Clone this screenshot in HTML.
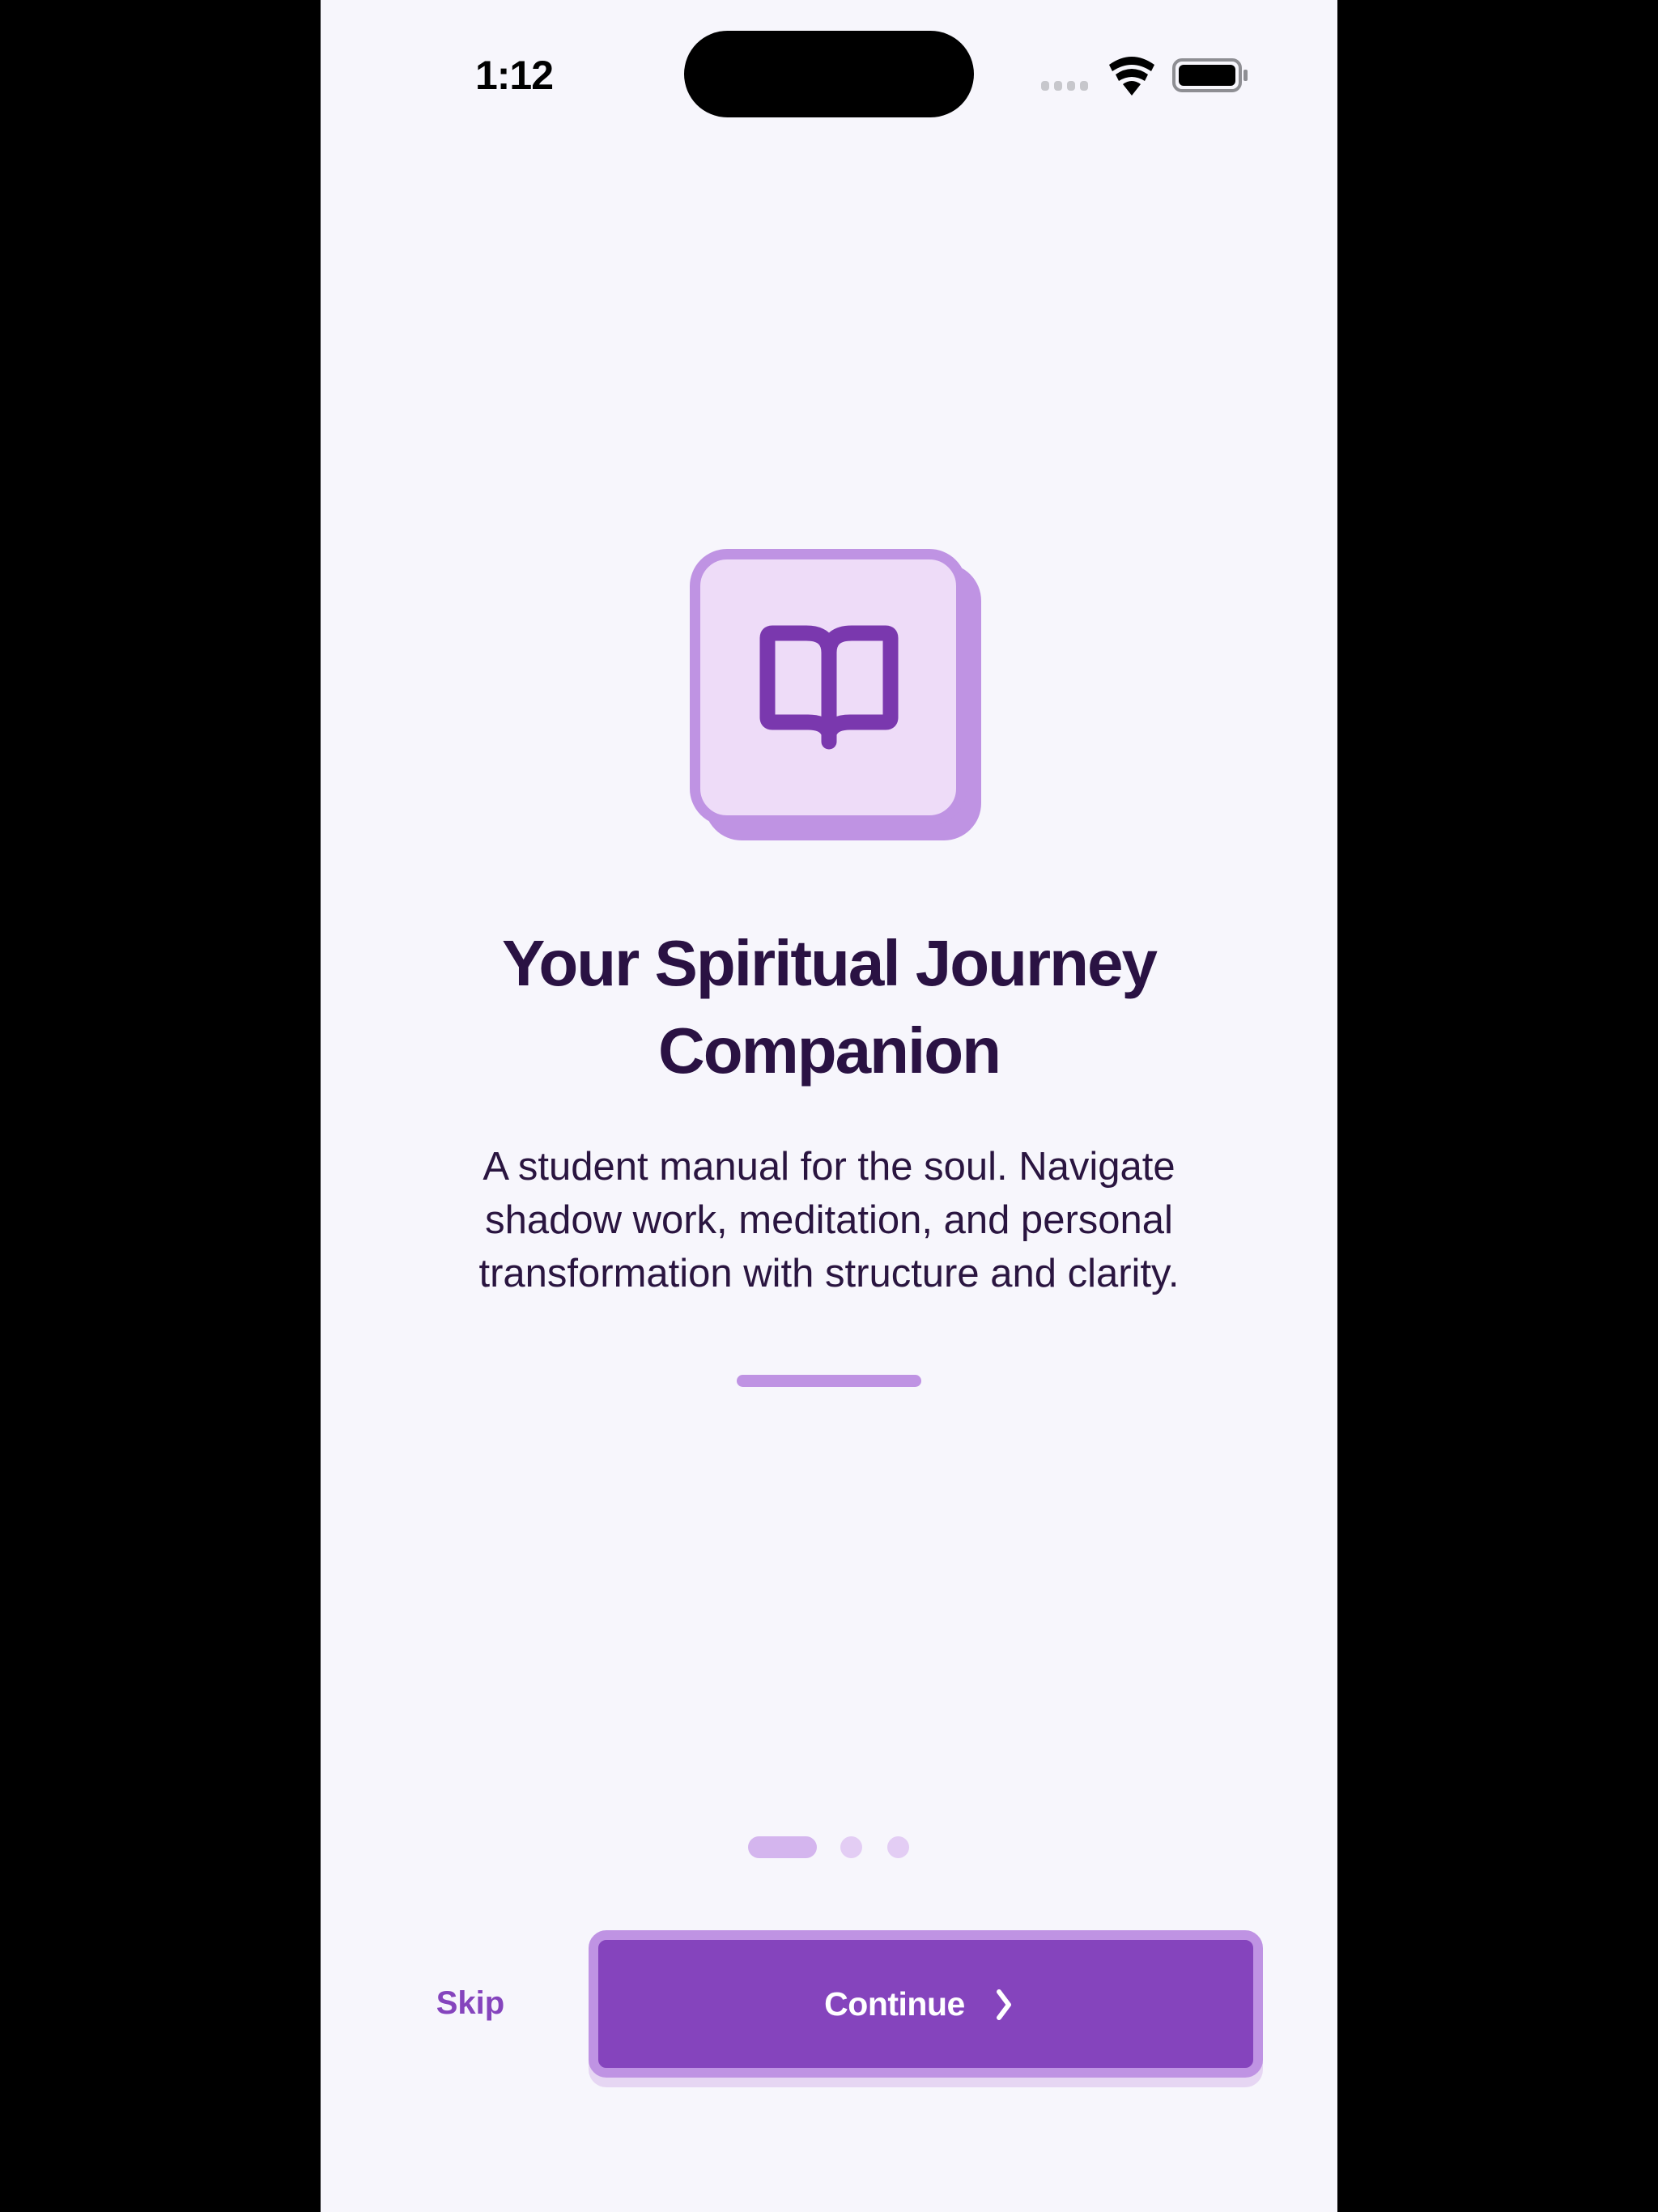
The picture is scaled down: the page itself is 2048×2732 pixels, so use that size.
<!DOCTYPE html>
<html><head><meta charset="utf-8"><style>
*{margin:0;padding:0;box-sizing:border-box}
body{width:2048px;height:2732px;background:#000;position:relative;overflow:hidden;font-family:"Liberation Sans",sans-serif}
#s{position:absolute;left:396px;top:0;width:1256px;height:2732px;background:#f7f6fc}
.a{position:absolute}
</style></head><body>
<div id="s"></div>
<div class="a" style="left:560px;top:64px;width:150px;text-align:center;font-size:50px;font-weight:bold;color:#000;letter-spacing:-1px">1:12</div>
<div class="a" style="left:845px;top:38px;width:358px;height:107px;border-radius:54px;background:#000"></div>
<svg class="a" style="left:1280px;top:66px" width="270" height="56" viewBox="0 0 270 56">
<g fill="#c7c7cc"><rect x="6" y="34" width="10" height="12" rx="4"/><rect x="22" y="34" width="10" height="12" rx="4"/><rect x="38" y="34" width="10" height="12" rx="4"/><rect x="54" y="34" width="10" height="12" rx="4"/></g>
<g fill="#000"><path d="M90 14 Q118 -6 146 14 L142 22 Q118 6 94 22Z"/><path d="M98 26 Q118 12 138 26 L134 34 Q118 24 102 34Z"/><path d="M107 38 Q118 30 129 38 L118 52Z"/></g>
<rect x="170" y="8" width="82" height="38" rx="10" fill="none" stroke="#8e8e93" stroke-width="4"/>
<rect x="176" y="14" width="70" height="26" rx="6" fill="#000"/>
<rect x="256" y="20" width="5" height="14" rx="2" fill="#8e8e93"/>
</svg>
<div class="a" style="left:870px;top:696px;width:342px;height:342px;border-radius:46px;background:#bf93e3"></div>
<div class="a" style="left:852px;top:678px;width:342px;height:342px;border-radius:46px;background:#eedcf8;border:13px solid #bf93e3"></div>
<svg class="a" style="left:930px;top:766px" width="188" height="170" viewBox="0 0 188 170">
<g fill="none" stroke="#7a38ae" stroke-width="19" stroke-linejoin="round" stroke-linecap="round">
<path d="M94 40 Q94 16 66 16 H24 Q18 16 18 22 V120 Q18 126 24 126 H68 Q90 126 94 140"/>
<path d="M94 40 Q94 16 122 16 H164 Q170 16 170 22 V120 Q170 126 164 126 H120 Q98 126 94 140"/>
<path d="M94 40 V150"/>
</g>
</svg>
<div class="a" style="left:396px;top:1136px;width:1256px;text-align:center;font-size:80px;font-weight:bold;letter-spacing:-2px;line-height:108px;color:#2a1243">Your Spiritual Journey<br>Companion</div>
<div class="a" style="left:396px;top:1408px;width:1256px;text-align:center;font-size:49px;line-height:66px;color:#2a1540">A student manual for the soul. Navigate<br>shadow work, meditation, and personal<br>transformation with structure and clarity.</div>
<div class="a" style="left:910px;top:1698px;width:228px;height:15px;border-radius:8px;background:#bf93e3"></div>
<div class="a" style="left:924px;top:2268px;width:85px;height:27px;border-radius:14px;background:#d4b5ee"></div>
<div class="a" style="left:1038px;top:2268px;width:27px;height:27px;border-radius:50%;background:#e3cdf4"></div>
<div class="a" style="left:1096px;top:2268px;width:27px;height:27px;border-radius:50%;background:#e3cdf4"></div>
<div class="a" style="left:520px;top:2452px;width:122px;text-align:center;font-size:40px;font-weight:bold;color:#8544bd">Skip</div>
<div class="a" style="left:727px;top:2396px;width:833px;height:182px;border-radius:22px;background:#e6d6f3"></div>
<div class="a" style="left:727px;top:2384px;width:833px;height:182px;border-radius:22px;background:#8544bd;border:12px solid #bf93e3"></div>
<div class="a" style="left:1000px;top:2452px;width:210px;text-align:center;font-size:41px;font-weight:bold;color:#fff;letter-spacing:-0.5px">Continue</div>
<svg class="a" style="left:1226px;top:2454px" width="30" height="44" viewBox="0 0 30 44"><path d="M8 6 L20 22 L8 38" fill="none" stroke="#fff" stroke-width="6" stroke-linecap="round" stroke-linejoin="round"/></svg>
</body></html>
